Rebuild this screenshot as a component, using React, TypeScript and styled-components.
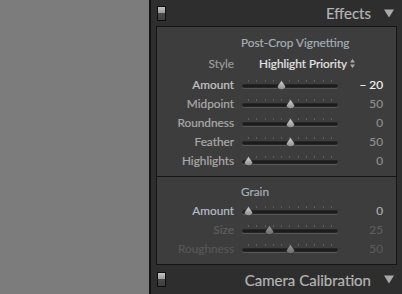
import styled, { createGlobalStyle } from "styled-components";

const Global = createGlobalStyle`
  html, body {
    margin: 0;
    padding: 0;
    background: #7c7c7c;
    overflow: hidden;
  }
  body {
    font-family: Lato, "Liberation Sans", sans-serif;
    -webkit-text-stroke: 0.2px currentColor;
  }
`;

const Page = styled.div`
  display: flex;
  width: 402px;
  height: 294px;
  overflow: hidden;
`;

const Backdrop = styled.div`
  width: 149px;
  flex: none;
  background: #7c7c7c;
`;

const Panel = styled.div`
  flex: 1;
  display: flex;
  flex-direction: column;
  background: #2e2e2e;
  border-left: 2px solid #121212;
`;

const Header = styled.div<{ $h: number }>`
  height: ${(p) => p.$h}px;
  flex: none;
  display: flex;
  align-items: center;
  padding: 0 8px 0 6px;
`;

const Switch = styled.div`
  width: 7px;
  height: 13px;
  border: 1px solid #0e0e0e;
  background: linear-gradient(
    to bottom,
    #c4c4c4 0%,
    #9a9a9a 45%,
    #4a4a4a 50%,
    #3e3e3e 100%
  );
`;

const HeaderTitle = styled.div`
  margin-left: auto;
  font-size: 15px;
  color: #b4b4b4;
`;

const Arrow = styled.svg`
  margin-left: 13px;
  flex: none;
`;

const Box = styled.div`
  margin: 0 5px;
  border: 1px solid #151515;
  background: #3d3d3d;
  display: flex;
  flex-direction: column;
`;

const Section = styled.div<{ $top: number; $bottom: number }>`
  padding: ${(p) => p.$top}px 0 ${(p) => p.$bottom}px;
  & + & {
    border-top: 1px solid #151515;
  }
`;

const SectionTitle = styled.div`
  height: 19px;
  line-height: 19px;
  font-size: 11.8px;
  color: #a5adb5;
  padding-left: 84px;
`;

const Row = styled.div<{ $h?: number }>`
  display: grid;
  grid-template-columns: 77px 96px 1fr;
  column-gap: 8px;
  align-items: center;
  height: ${(p) => p.$h ?? 19}px;
  padding-right: 13px;
`;

const Label = styled.div<{ $c: string }>`
  text-align: right;
  font-size: 11.8px;
  color: ${(p) => p.$c};
  white-space: nowrap;
`;

const Value = styled.div<{ $c: string }>`
  text-align: right;
  font-size: 11.8px;
  color: ${(p) => p.$c};
`;

const Choice = styled.div`
  grid-column: 2 / 4;
  display: flex;
  align-items: center;
  gap: 3px;
  font-size: 11.8px;
  color: #e4e4e4;
  white-space: nowrap;
  padding-left: 17px;
`;

const UpDown = styled.svg`
  flex: none;
`;

const Slider = styled.div`
  position: relative;
  height: 10px;
  display: flex;
  flex-direction: column;
  gap: 2px;
`;

const Ticks = styled.div`
  display: flex;
  justify-content: space-between;
  height: 2px;
  margin: 0 6px;
`;

const Tick = styled.span`
  width: 1px;
  height: 2px;
  background: #5e5e5e;
`;

const Groove = styled.div`
  height: 2px;
  border-radius: 2px;
  background: #1c1c1c;
  border: 1px solid #262626;
  box-shadow: 0 1px 0 #575757;
`;

const Thumb = styled.svg`
  position: absolute;
  top: 0;
  margin-left: -4.5px;
`;

function Slide({ frac, dim }: { frac: number; dim?: boolean }) {
  const id = dim ? "thumbDim" : "thumbLit";
  return (
    <Slider>
      <Ticks>
        {Array.from({ length: 11 }).map((_, i) => (
          <Tick key={i} />
        ))}
      </Ticks>
      <Groove />
      <Thumb width="9" height="10" viewBox="0 0 9 10" style={{ left: 6 + frac * 84 }}>
        <defs>
          <linearGradient id={id} x1="0" y1="0" x2="0" y2="1">
            <stop offset="0" stopColor={dim ? "#9a9a9a" : "#d6d6d6"} />
            <stop offset="1" stopColor={dim ? "#6a6a6a" : "#8c8c8c"} />
          </linearGradient>
        </defs>
        <path
          d="M4.5 0.3 L7.8 5 Q8.8 6.4 8.4 7.8 Q7.6 9.7 4.5 9.7 Q1.4 9.7 0.6 7.8 Q0.2 6.4 1.2 5 Z"
          fill={`url(#${id})`}
          stroke="#262626"
          strokeWidth="0.6"
        />
      </Thumb>
    </Slider>
  );
}

type Param = {
  label: string;
  value: string;
  frac: number;
  lc: string;
  vc: string;
  dim?: boolean;
};

const vignette: Param[] = [
  { label: "Amount", value: "– 20", frac: 0.4, lc: "#c4c4c4", vc: "#f2f2f2" },
  { label: "Midpoint", value: "50", frac: 0.5, lc: "#a9a9a9", vc: "#8f8f8f" },
  { label: "Roundness", value: "0", frac: 0.5, lc: "#a9a9a9", vc: "#8f8f8f" },
  { label: "Feather", value: "50", frac: 0.5, lc: "#a9a9a9", vc: "#8f8f8f" },
  { label: "Highlights", value: "0", frac: 0, lc: "#a9a9a9", vc: "#8f8f8f" },
];

const grain: Param[] = [
  { label: "Amount", value: "0", frac: 0, lc: "#b3bcc6", vc: "#a9b0b8" },
  { label: "Size", value: "25", frac: 0.25, lc: "#5e5e5e", vc: "#5e5e5e", dim: true },
  { label: "Roughness", value: "50", frac: 0.5, lc: "#575757", vc: "#5a5a5a", dim: true },
];

function ParamRow({ p }: { p: Param }) {
  return (
    <Row>
      <Label $c={p.lc}>{p.label}</Label>
      <Slide frac={p.frac} dim={p.dim} />
      <Value $c={p.vc}>{p.value}</Value>
    </Row>
  );
}

function PanelHeader({ title, h }: { title: string; h: number }) {
  return (
    <Header $h={h}>
      <Switch />
      <HeaderTitle>{title}</HeaderTitle>
      <Arrow width="10" height="9" viewBox="0 0 10 9">
        <path d="M0 0.5 H10 L5 8.5 Z" fill="#a9a9a9" />
      </Arrow>
    </Header>
  );
}

export default function App() {
  return (
    <Page>
      <Global />
      <Backdrop />
      <Panel>
        <PanelHeader title="Effects" h={26} />
        <Box>
          <Section $top={6} $bottom={6}>
            <SectionTitle>Post-Crop Vignetting</SectionTitle>
            <Row $h={23}>
              <Label $c="#9c9c9c">Style</Label>
              <Choice>
                Highlight Priority
                <UpDown width="5" height="9" viewBox="0 0 5 9">
                  <path d="M2.5 0 L5 3.5 H0 Z M2.5 9 L5 5.5 H0 Z" fill="#a8a8a8" />
                </UpDown>
              </Choice>
            </Row>
            {vignette.map((p) => (
              <ParamRow key={p.label} p={p} />
            ))}
          </Section>
          <Section $top={5} $bottom={6}>
            <SectionTitle>Grain</SectionTitle>
            {grain.map((p) => (
              <ParamRow key={p.label} p={p} />
            ))}
          </Section>
        </Box>
        <PanelHeader title="Camera Calibration" h={29} />
      </Panel>
    </Page>
  );
}
